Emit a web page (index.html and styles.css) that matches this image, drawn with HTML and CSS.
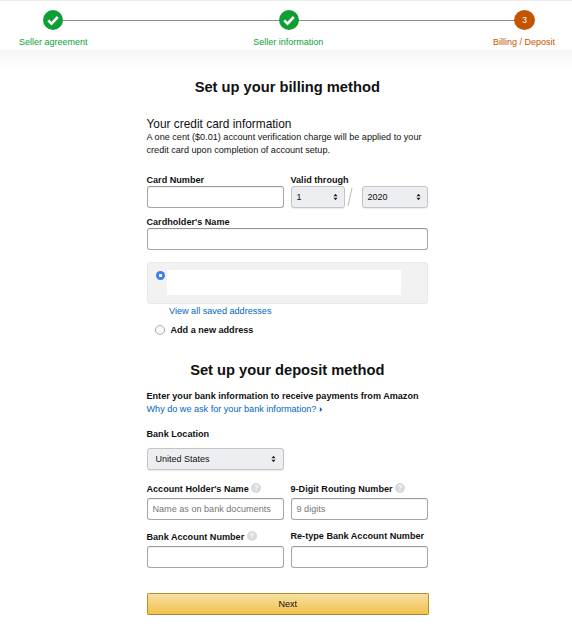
FILE: index.html
```html
<!DOCTYPE html>
<html lang="en">
<head>
<meta charset="utf-8">
<title>Billing / Deposit</title>
<link rel="stylesheet" href="styles.css">
</head>
<body>
<header class="stepper">
  <div class="track">
    <span class="dot done"><svg viewBox="0 0 20 20" class="check"><path d="M5.2 10.4l3.3 3.2 6.3-6.6" fill="none" stroke="#fff" stroke-width="2.6"/></svg></span>
    <span class="line"></span>
    <span class="dot done"><svg viewBox="0 0 20 20" class="check"><path d="M5.2 10.4l3.3 3.2 6.3-6.6" fill="none" stroke="#fff" stroke-width="2.6"/></svg></span>
    <span class="line"></span>
    <span class="dot current">3</span>
  </div>
  <div class="step-labels">
    <span class="step-label green">Seller agreement</span>
    <span class="step-label green middle">Seller information</span>
    <span class="step-label orange">Billing / Deposit</span>
  </div>
</header>
<div class="fade"></div>
<main class="content">
  <h1 class="title first">Set up your billing method</h1>
  <h2 class="subtitle">Your credit card information</h2>
  <p class="note">A one cent ($0.01) account verification charge will be applied to your credit card upon completion of account setup.</p>

  <div class="cols card-row">
    <div class="col">
      <label class="label">Card Number</label>
      <div class="input"></div>
    </div>
    <div class="col">
      <label class="label">Valid through</label>
      <div class="expiry">
        <div class="select month">1<svg class="arrows" viewBox="0 0 6 9"><path d="M3 .5L5.5 3.6H.5zM3 8.5L.5 5.4h5z" fill="#222"/></svg></div>
        <svg class="slash" viewBox="0 0 6 20"><path d="M5 1L1 19" stroke="#bbb" stroke-width="1" fill="none"/></svg>
        <div class="select year">2020<svg class="arrows" viewBox="0 0 6 9"><path d="M3 .5L5.5 3.6H.5zM3 8.5L.5 5.4h5z" fill="#222"/></svg></div>
      </div>
    </div>
  </div>
  <label class="label name-label">Cardholder's Name</label>
  <div class="input"></div>

  <div class="address-box">
    <span class="radio on"></span>
    <div class="address-blank"></div>
  </div>
  <a class="link view-all">View all saved addresses</a>
  <div class="new-address">
    <span class="radio off"></span>
    <span class="new-label">Add a new address</span>
  </div>

  <h1 class="title second">Set up your deposit method</h1>
  <p class="bank-intro">Enter your bank information to receive payments from Amazon</p>
  <a class="link why">Why do we ask for your bank information?<svg class="caret" viewBox="0 0 4 6"><path d="M.6 0L3.6 3 .6 6z" fill="#0066c0"/></svg></a>

  <label class="label location-label">Bank Location</label>
  <div class="select country">United States<svg class="arrows" viewBox="0 0 6 9"><path d="M3 .5L5.5 3.6H.5zM3 8.5L.5 5.4h5z" fill="#222"/></svg></div>

  <div class="cols holder-row">
    <div class="col">
      <label class="label">Account Holder's Name <span class="help">?</span></label>
      <div class="input placeholder">Name as on bank documents</div>
    </div>
    <div class="col">
      <label class="label">9-Digit Routing Number <span class="help">?</span></label>
      <div class="input placeholder">9 digits</div>
    </div>
  </div>
  <div class="cols account-row">
    <div class="col">
      <label class="label">Bank Account Number <span class="help">?</span></label>
      <div class="input"></div>
    </div>
    <div class="col">
      <label class="label">Re-type Bank Account Number</label>
      <div class="input"></div>
    </div>
  </div>

  <button class="next" type="button">Next</button>
</main>
</body>
</html>
```
FILE: styles.css
```css
* { box-sizing: border-box; }
html, body { margin: 0; padding: 0; }
body {
  width: 572px;
  height: 637px;
  overflow: hidden;
  background: #fff;
  font-family: "Liberation Sans", Arial, sans-serif;
  color: #111;
  font-size: 9.1px;
}
.stepper {
  height: 50px;
  padding-top: 9px;
  border-top: 1px solid #ececec;
  background: #fff;
}
.track {
  display: flex;
  align-items: center;
  padding: 0 37px 0 43px;
  height: 20px;
}
.dot {
  flex: none;
  width: 20px;
  height: 20px;
  border-radius: 50%;
  display: flex;
  align-items: center;
  justify-content: center;
}
.done { background: #0d9f33; }
.current {
  width: 21px;
  background: #c45500;
  color: #fff;
  font-size: 8.5px;
}
.check { width: 20px; height: 20px; display: block; }
.line { flex: 1; height: 1px; background: #8c8c8c; }
.step-labels {
  display: flex;
  justify-content: space-between;
  padding: 0 17px 0 19px;
  margin-top: 7px;
  font-size: 9px;
  line-height: 11px;
}
.middle { margin-right: 4px; }
.green { color: #0d9f33; }
.orange { color: #c45500; }
.fade {
  height: 20px;
  background: linear-gradient(#f6f6f6, #fff);
}
.content {
  width: 281.5px;
  margin-left: 146.5px;
}
.title {
  margin: 0;
  font-size: 14.7px;
  line-height: 18px;
  font-weight: 700;
  text-align: center;
}
.first { padding-top: 8px; }
.subtitle {
  margin: 22px 0 0;
  font-size: 11.9px;
  line-height: 13px;
  font-weight: 400;
}
.note {
  margin: 0;
  font-size: 9.1px;
  line-height: 13px;
}
.cols { display: flex; gap: 7px; }
.col { width: 137px; flex: none; }
.col + .col { width: 137.5px; }
.card-row { margin-top: 18px; }
.label {
  display: block;
  font-weight: 700;
  font-size: 9.1px;
  line-height: 11px;
}
.input {
  height: 22px;
  border: 1px solid #a6a6a6;
  border-top-color: #949494;
  border-radius: 3px;
  background: #fff;
  box-shadow: inset 0 1px 1px rgba(0,0,0,.05);
}
.expiry { display: flex; align-items: center; }
.select {
  height: 22px;
  display: flex;
  align-items: center;
  justify-content: space-between;
  border: 1px solid #c4c4c4;
  border-radius: 3px;
  background: #eceef1;
  font-size: 9px;
  padding: 0 6px 0 5px;
  box-shadow: 0 1px 1px rgba(0,0,0,.08);
}
.arrows { width: 5px; height: 8px; flex: none; }
.month { width: 54px; }
.year { width: 66px; }
.slash { width: 6px; height: 20px; margin: 0 9px 0 2px; flex: none; }
.name-label { margin-top: 9px; }
.address-box {
  height: 42px;
  margin-top: 12px;
  background: #f2f2f2;
  border: 1px solid #e8e8e8;
  border-radius: 3px;
  display: flex;
  align-items: flex-start;
  padding: 7px 0 0 8px;
}
.radio {
  display: block;
  width: 9px;
  height: 9px;
  border-radius: 50%;
  flex: none;
}
.on {
  background: radial-gradient(circle, #fff 0 1.4px, #3b82f0 1.9px);
  margin-top: 1px;
}
.off {
  width: 10px;
  height: 10px;
  background: #fff;
  border: 1px solid #a8a8a8;
}
.address-blank {
  width: 234px;
  height: 25px;
  margin-left: 2px;
  background: #fff;
}
.link {
  display: block;
  color: #0066c0;
  font-size: 9.1px;
  line-height: 12px;
}
.view-all { margin: 1px 0 0 22.5px; }
.new-address {
  display: flex;
  align-items: center;
  margin: 7px 0 0 8px;
  line-height: 12px;
}
.new-label { margin-left: 6px; font-weight: 700; font-size: 9.1px; }
.second { margin-top: 25px; }
.bank-intro {
  margin: 11px 0 0;
  font-weight: 700;
  font-size: 9.1px;
  line-height: 12px;
}
.why { margin-top: 1px; }
.caret { width: 4px; height: 5px; margin-left: 3px; }
.location-label { margin-top: 14px; }
.country { width: 137px; margin-top: 8px; padding: 0 7px 0 8px; }
.holder-row { margin-top: 13px; }
.account-row { margin-top: 11px; }
.holder-row .label, .account-row .label { height: 15px; }
.help {
  display: inline-flex;
  align-items: center;
  justify-content: center;
  vertical-align: 2px;
  width: 10px;
  height: 10px;
  margin-left: 0;
  border-radius: 50%;
  background: #dadada;
  color: #fff;
  font-size: 7.5px;
  line-height: 10px;
}
.placeholder {
  display: flex;
  align-items: center;
  padding-left: 5px;
  color: #767676;
  font-size: 9.1px;
}
.next {
  display: block;
  width: 282.5px;
  height: 22px;
  margin-top: 25px;
  padding: 0;
  border: 1px solid #b5902f;
  border-bottom-color: #a88734;
  border-radius: 2px;
  background: linear-gradient(#f7dfa5, #f0c14b);
  font-family: inherit;
  font-size: 9px;
  color: #111;
}
```
